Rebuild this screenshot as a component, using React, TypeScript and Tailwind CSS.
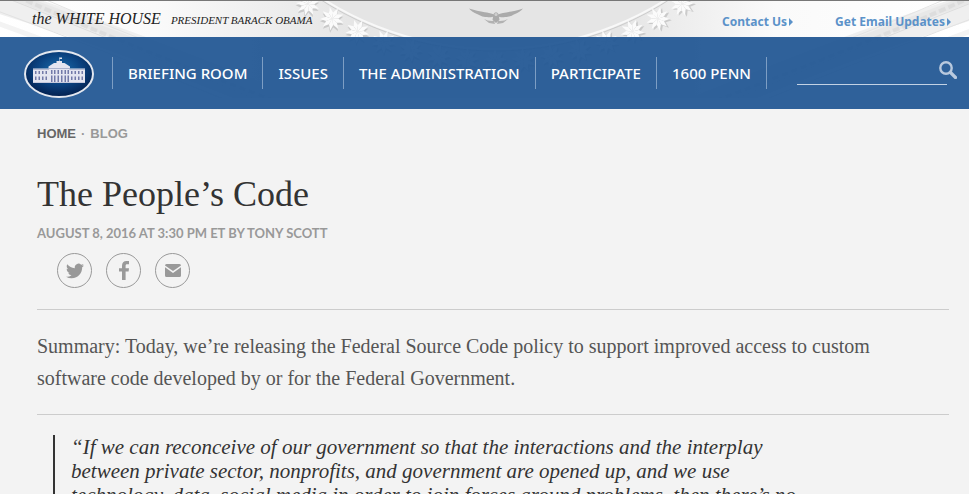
import React from "react";

const SERIF = "font-['Liberation_Serif',serif]";
const SANS = "font-['Noto_Sans',sans-serif]";

const navItems = ["BRIEFING ROOM", "ISSUES", "THE ADMINISTRATION", "PARTICIPATE", "1600 PENN"];

const petals = [0, 40, 80, 120, 160, 200, 240, 280, 320];
const starAngles = Array.from({ length: 15 }, (_, i) => (i - 7) * 4.85);

function Star({ angle }: { angle: number }) {
  const a = (angle * Math.PI) / 180;
  const x = 495 + 335 * Math.sin(a);
  const y = -274 + 335 * Math.cos(a);
  return (
    <g transform={`translate(${x} ${y}) rotate(${-angle})`}>
      <g transform="translate(1 2)" fill="#b5b5b5" opacity="0.6">
        {petals.map((p) => (
          <path key={p} d="M0 0 L-2.2 -6 L0 -12 L2.2 -6 Z" transform={`rotate(${p})`} />
        ))}
      </g>
      <g fill="#fbfbfb">
        {petals.map((p) => (
          <path key={p} d="M0 0 L-2.1 -6 L0 -12 L2.1 -6 Z" transform={`rotate(${p})`} />
        ))}
      </g>
    </g>
  );
}

function Moulding() {
  return (
    <g fill="none">
      <path d="M-30 -14 Q120 28 330 116" stroke="#efefef" strokeWidth="26" />
      <path d="M-10 -20 Q130 32 330 110" stroke="#e8e8e8" strokeWidth="8" />
      <path d="M10 -16 Q130 40 330 114" stroke="#d9d9d9" strokeWidth="4" strokeDasharray="7 3" opacity="0.7" />
      <path d="M-10 -16 Q120 34 330 122" stroke="#dedede" strokeWidth="1" />
      <path d="M-40 -10 Q100 40 300 122" stroke="#e2e2e2" strokeWidth="1" />
      <path d="M-50 0 Q90 46 280 128" stroke="#f3f3f3" strokeWidth="5" />
      <path d="M30 -16 Q150 38 340 106" stroke="#e4e4e4" strokeWidth="1" />
    </g>
  );
}

function CeilingArt() {
  return (
    <svg
      className="absolute inset-x-0 top-0 h-[98px] w-full"
      viewBox="0 0 969 98"
      preserveAspectRatio="xMidYMin slice"
      aria-hidden="true"
    >
      <defs>
        <linearGradient id="plaster" x1="0" x2="1" y1="0" y2="0">
          <stop offset="0" stopColor="#ffffff" />
          <stop offset="0.16" stopColor="#fafafa" />
          <stop offset="0.36" stopColor="#e6e6e6" />
          <stop offset="0.64" stopColor="#e5e5e5" />
          <stop offset="0.8" stopColor="#fafafa" />
          <stop offset="1" stopColor="#ffffff" />
        </linearGradient>
      </defs>
      <rect width="969" height="98" fill="url(#plaster)" />
      <g transform="translate(-20 0)">
        <Moulding />
      </g>
      <g transform="translate(1010 0) scale(-1 1)">
        <Moulding />
      </g>
      <circle cx="495" cy="-271" r="322" fill="none" stroke="#cccccc" strokeWidth="1" />
      <circle cx="495" cy="-271" r="320" fill="#e5e5e5" stroke="#f8f8f8" strokeWidth="2" />
      {starAngles.map((a) => (
        <Star key={a} angle={a} />
      ))}
      <g fill="#ababab">
        <path d="M469 8.500 C476 11 484 12 489 13 C492 13.500 494 14 495 16 C492 17.500 489 17.500 487 17 C482 17 480 15.500 477 14 C474 13 471 11 469 8.500 Z" />
        <path d="M523 8.500 C516 11 508 12 503 13 C500 13.500 498 14 497 16 C500 17.500 503 17.500 505 17 C510 17 512 15.500 515 14 C518 13 521 11 523 8.500 Z" />
        <path d="M493.500 14 Q496 10.500 498.500 14 L499.500 20 L496 23 L492.500 20 Z" />
        <path d="M484 19 Q488 21.500 494 21 L495 24 L489 23 Z M508 19 Q504 21.500 498 21 L497 24 L503 23 Z" fill="#b2b2b2" />
      </g>
      <circle cx="496" cy="14.500" r="1.500" fill="#d0d0d0" />
    </svg>
  );
}

function Seal() {
  return (
    <svg className="h-12 w-[70px]" viewBox="0 0 140 96" role="img" aria-label="The White House">
      <defs>
        <radialGradient id="seal" cx="0.5" cy="0.4" r="0.6">
          <stop offset="0" stopColor="#1a6cab" />
          <stop offset="0.55" stopColor="#0b4280" />
          <stop offset="1" stopColor="#03204f" />
        </radialGradient>
      </defs>
      <ellipse cx="70" cy="48" rx="68" ry="46" fill="url(#seal)" stroke="#e3e7ef" strokeWidth="4" />
      <g fill="#e4e5f0">
        <rect x="71" y="15" width="5" height="3" />
        <rect x="70" y="15" width="1" height="10" />
        <rect x="65" y="22" width="11" height="4" />
        <path d="M49 33 L60 26 H81 L92 33 V37 H49 Z" />
        <rect x="18" y="37" width="104" height="28" />
      </g>
      <g fill="#a9adc9">
        <rect x="18" y="38" width="32" height="1.500" />
        <rect x="91" y="38" width="31" height="1.500" />
        <rect x="49" y="36" width="43" height="1.500" />
      </g>
      <g fill="#737aa8">
        {[22, 29, 36, 43, 94, 101, 108, 115].map((x) => (
          <g key={x}>
            <rect x={x} y="42" width="3" height="6" />
            <rect x={x} y="53" width="3" height="7" />
          </g>
        ))}
        {[54, 60, 67, 74, 81, 87].map((x) => (
          <g key={x}>
            <rect x={x} y="40" width="3" height="8" />
            <rect x={x} y="51" width="3" height="13" />
          </g>
        ))}
      </g>
      <rect x="18" y="64" width="104" height="2" fill="#c6c9dc" />
    </svg>
  );
}

function TopLink({ label }: { label: string }) {
  return (
    <a href="#" className="flex items-center gap-0.5 text-xs leading-4 font-bold text-[#5b92c9]">
      {label}
      <svg className="h-2 w-1" viewBox="0 0 4 8" fill="currentColor" aria-hidden="true">
        <path d="M0 0 L4 4 L0 8 Z" />
      </svg>
    </a>
  );
}

function ShareLink({ label, children }: { label: string; children: React.ReactNode }) {
  return (
    <a
      href="#"
      aria-label={label}
      className="flex size-[35px] items-center justify-center rounded-full border border-[#999] text-[#999]"
    >
      {children}
    </a>
  );
}

export default function App() {
  return (
    <div className={`min-h-screen bg-[#f3f3f3] ${SANS}`}>
      <header className="relative bg-white">
        <CeilingArt />
        <div className="relative flex h-[37px] items-center justify-between border-t border-[#777] pr-[18px] pl-8">
          <a href="#" className={`flex items-baseline gap-2.5 text-[#222] italic ${SERIF}`}>
            <span className="text-base">the WHITE HOUSE</span>
            <span className="text-[11px]">PRESIDENT BARACK OBAMA</span>
          </a>
          <div className="flex gap-[42px] pt-1.5">
            <TopLink label="Contact Us" />
            <TopLink label="Get Email Updates" />
          </div>
        </div>
        <div className="relative flex h-[72px] items-center bg-[#225794]/94 pr-3 pl-6">
          <a href="#" className="mr-[18px] shrink-0 pt-0.5">
            <Seal />
          </a>
          <nav>
            <ul className="flex border-l border-[#7d9ec4]">
              {navItems.map((item) => (
                <li key={item} className="border-r border-[#7d9ec4] px-[15px]">
                  <a href="#" className="block text-[15px] leading-8 font-medium whitespace-nowrap text-white">
                    {item}
                  </a>
                </li>
              ))}
            </ul>
          </nav>
          <form className="ml-auto flex items-end" role="search">
            <input
              type="search"
              aria-label="Search"
              className="h-6 w-[150px] border-b border-[#c3d2e4] bg-transparent text-sm text-white outline-none"
            />
            <button type="submit" aria-label="Search" className="-ml-2 mb-1.5">
              <svg className="size-[18px]" viewBox="0 0 18 18" fill="none" stroke="#b9c9de" aria-hidden="true">
                <circle cx="7" cy="7" r="5.700" strokeWidth="2.400" />
                <path d="M11.500 11.500 L16.500 16.500" strokeWidth="3.200" strokeLinecap="round" />
              </svg>
            </button>
          </form>
        </div>
      </header>

      <main className="pr-5 pl-[37px]">
        <nav
          aria-label="Breadcrumb"
          className="flex gap-[5px] pt-[17px] font-['Liberation_Sans',sans-serif] text-[13px] leading-4 font-bold text-[#999]"
        >
          <a href="#" className="text-[#666]">
            HOME
          </a>
          <span>·</span>
          <a href="#">BLOG</a>
        </nav>
        <h1 className={`mt-7 text-4xl leading-12 text-[#333] ${SERIF}`}>The People’s Code</h1>
        <p className="mt-[7px] font-['Lato',sans-serif] text-[13px] leading-4 font-bold text-[#999]">
          AUGUST 8, 2016 AT 3:30 PM ET BY TONY SCOTT
        </p>
        <div className="mt-3 flex gap-3.5 pl-5">
          <ShareLink label="Share on Twitter">
            <svg className="size-[18px]" viewBox="0 0 24 24" fill="currentColor" aria-hidden="true">
              <path d="M23.950 4.570a10 10 0 0 1-2.820.770 4.960 4.960 0 0 0 2.160-2.720c-.950.560-2 .960-3.130 1.190a4.920 4.920 0 0 0-8.380 4.480C7.690 8.090 4.070 6.130 1.640 3.160a4.820 4.820 0 0 0-.660 2.480c0 1.710.870 3.210 2.190 4.100a4.900 4.900 0 0 1-2.230-.620v.060a4.920 4.920 0 0 0 3.950 4.830 5 5 0 0 1-2.210.080 4.940 4.940 0 0 0 4.600 3.420A9.870 9.870 0 0 1 0 19.540a13.990 13.990 0 0 0 7.550 2.210c9.050 0 14-7.500 14-13.980 0-.210 0-.420-.020-.630a9.940 9.940 0 0 0 2.420-2.570z" />
            </svg>
          </ShareLink>
          <ShareLink label="Share on Facebook">
            <svg className="h-[19px] w-2.5" viewBox="0 0 10 19" fill="currentColor" aria-hidden="true">
              <path d="M3 19V10.500H0V7.200h3V4.700C3 1.700 4.700 0 7.400 0H10v3.200H8.200C6.900 3.200 6.600 3.800 6.600 4.800v2.400H10l-.4 3.300h-3V19z" />
            </svg>
          </ShareLink>
          <ShareLink label="Share by email">
            <svg className="h-[13px] w-4" viewBox="0 0 16 13" fill="currentColor" aria-hidden="true">
              <path d="M1.500 0h13A1.500 1.500 0 0 1 16 1.500L8 7 0 1.500A1.500 1.500 0 0 1 1.500 0z" />
              <path d="M0 3.300 8 9l8-5.700v8.200a1.500 1.500 0 0 1-1.500 1.500h-13A1.500 1.500 0 0 1 0 11.500z" />
            </svg>
          </ShareLink>
        </div>
        <p className={`mt-[21px] border-y border-[#ccc] py-5 text-xl leading-8 text-[#555] ${SERIF}`}>
          Summary: Today, we’re releasing the Federal Source Code policy to support improved access to custom
          <br />
          software code developed by or for the Federal Government.
        </p>
        <blockquote
          className={`mt-5 ml-4 border-l-2 border-[#333] pl-4 text-[21px] leading-6 text-[#333] italic ${SERIF}`}
        >
          “If we can reconceive of our government so that the interactions and the interplay
          <br />
          between private sector, nonprofits, and government are opened up, and we use
          <br />
          technology, data, social media in order to join forces around problems, then there’s no
        </blockquote>
      </main>
    </div>
  );
}
